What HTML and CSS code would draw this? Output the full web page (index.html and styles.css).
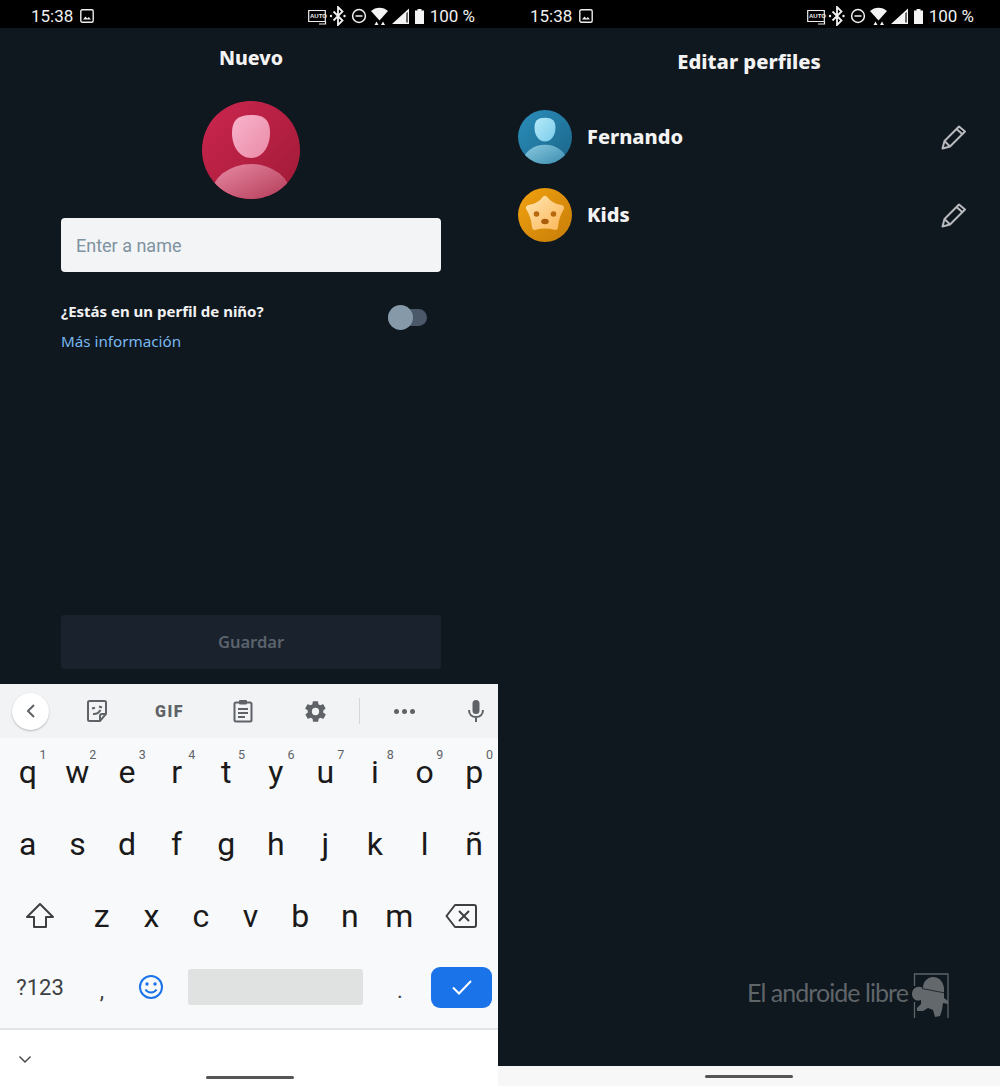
FILE: index.html
```html
<!DOCTYPE html>
<html lang="es">
<head>
<meta charset="utf-8">
<title>Perfiles</title>
<link rel="stylesheet" href="styles.css">
</head>
<body>
<svg class="defs" width="0" height="0" aria-hidden="true">
  <defs>
    <symbol id="status-icons" viewBox="0 0 116 20">
      <g fill="none" stroke="#eee" stroke-width="1.200">
        <path d="M.7 4.500h16.600v11H10.500H.7z"/>
        <path d="M11 18h6.500v-2.500"/>
      </g>
      <text x="2" y="12" class="tiny">AUTO</text>
      <g fill="none" stroke="#f2f2f2" stroke-width="1.800">
        <path d="M25.500 5.500l9 9-4.500 4.500V1l4.500 4.500-9 9"/>
        <circle cx="51" cy="10" r="6.400" stroke-width="1.500"/>
        <path d="M47.500 10h7" stroke-width="1.500"/>
      </g>
      <circle cx="23" cy="10" r="1.200" fill="#f2f2f2"/>
      <circle cx="36.500" cy="10" r="1.200" fill="#f2f2f2"/>
      <path fill="#f4f4f4" d="M63 5c4.500-4.500 12.500-4.500 17 0l-8.500 9.500z"/>
      <path fill="#f4f4f4" d="M66.500 19l2-3.500 2 3.500zM73 19l2-3.500 2 3.500z"/>
      <path fill="#f4f4f4" d="M84 18L101 2.500V18zM98.500 7l-.1 9.500h1.200V6z"/>
      <path fill="#f4f4f4" d="M107 4.500h2.500V3h4v1.500h2.500V18h-9z"/>
    </symbol>
    <symbol id="gallery" viewBox="0 0 14 14">
      <rect x=".8" y=".8" width="12.400" height="12.400" rx="1.500" fill="none" stroke="#eee" stroke-width="1.400"/>
      <path d="M3 10.500l2.500-3 1.800 2 1.500-1.500 2.200 2.500z" fill="#eee"/>
    </symbol>
    <symbol id="pencil" viewBox="0 0 26 26">
      <path fill="none" stroke="#b8babd" stroke-width="2" stroke-linejoin="round" d="M1.500 24.500l2-7.500L18 2.500l6 5L9 22.500zM15.500 5l6 5.300M3.500 17L9 22.500"/>
    </symbol>
    <linearGradient id="redbg" x1="0" y1="0" x2="1" y2="1">
      <stop offset="0" stop-color="#cc264f"/><stop offset="1" stop-color="#a01a36"/>
    </linearGradient>
    <linearGradient id="redface" x1="0" y1="0" x2="1" y2="1">
      <stop offset="0" stop-color="#f8b4cb"/><stop offset="1" stop-color="#ea8aa8"/>
    </linearGradient>
    <linearGradient id="redbody" x1="0" y1="0" x2=".6" y2="1">
      <stop offset="0" stop-color="#e98ca6"/><stop offset="1" stop-color="#a82a47"/>
    </linearGradient>
    <linearGradient id="bluebg" x1="0" y1="0" x2="1" y2="1">
      <stop offset="0" stop-color="#2b8fbb"/><stop offset="1" stop-color="#1b6488"/>
    </linearGradient>
    <linearGradient id="blueface" x1="0" y1="0" x2="1" y2="1">
      <stop offset="0" stop-color="#b6eafa"/><stop offset="1" stop-color="#7accea"/>
    </linearGradient>
    <linearGradient id="bluebody" x1="0" y1="0" x2=".6" y2="1">
      <stop offset="0" stop-color="#8ccbe0"/><stop offset="1" stop-color="#2b7fa4"/>
    </linearGradient>
    <linearGradient id="orangebg" x1="0" y1="0" x2="1" y2="1">
      <stop offset="0" stop-color="#f2a20f"/><stop offset="1" stop-color="#c67c08"/>
    </linearGradient>
    <linearGradient id="star" gradientUnits="userSpaceOnUse" x1="12" y1="8" x2="42" y2="42">
      <stop offset="0" stop-color="#ffe3ae"/><stop offset="1" stop-color="#fdb85a"/>
    </linearGradient>
    <clipPath id="circle-clip"><circle cx="49" cy="49" r="49"/></clipPath>
    <symbol id="avatar-red" viewBox="0 0 98 98">
      <circle cx="49" cy="49" r="49" fill="url(#redbg)"/>
      <path d="M49 14c14 0 19 6 19 18 0 14-8 25-19 25S30 46 30 32c0-12 5-18 19-18z" fill="url(#redface)"/>
      <ellipse cx="49" cy="95" rx="40" ry="32" fill="url(#redbody)" clip-path="url(#circle-clip)"/>
    </symbol>
    <symbol id="avatar-blue" viewBox="0 0 98 98">
      <circle cx="49" cy="49" r="49" fill="url(#bluebg)"/>
      <path d="M49 14c14 0 19 6 19 18 0 14-8 25-19 25S30 46 30 32c0-12 5-18 19-18z" fill="url(#blueface)"/>
      <ellipse cx="49" cy="95" rx="40" ry="32" fill="url(#bluebody)" clip-path="url(#circle-clip)"/>
    </symbol>
    <symbol id="avatar-kids" viewBox="0 0 54 54">
      <circle cx="27" cy="27" r="27" fill="url(#orangebg)"/>
      <path d="M27 11Q32 18 43 20 38 28 37 39 27 36 17 39 16 28 11 20 22 18 27 11z" fill="url(#star)" stroke="url(#star)" stroke-width="6" stroke-linejoin="round"/>
      <circle cx="18.500" cy="26" r="2.800" fill="#b8690f"/>
      <circle cx="35.500" cy="26" r="2.800" fill="#b8690f"/>
      <ellipse cx="27" cy="33.500" rx="3.800" ry="2.800" fill="#a85c0c"/>
    </symbol>
  </defs>
</svg>

<main class="page">
  <section class="phone phone-left">
    <header class="status">
      <div class="status-time"><span>15:38</span><svg class="ic-gallery"><use href="#gallery"/></svg></div>
      <div class="status-right"><svg class="ic-status"><use href="#status-icons"/></svg><span>100 %</span></div>
    </header>
    <div class="screen new-profile">
      <h1 class="title title-new">Nuevo</h1>
      <svg class="avatar-big"><use href="#avatar-red"/></svg>
      <div class="input">Enter a name</div>
      <div class="kid-row">
        <div class="kid-text">
          <p class="kid-q">¿Estás en un perfil de niño?</p>
          <a class="kid-link">Más información</a>
        </div>
        <div class="toggle"><span class="toggle-knob"></span></div>
      </div>
      <div class="save">Guardar</div>
    </div>
    <div class="keyboard">
      <div class="kb-tools">
        <span class="kb-back"><svg width="12" height="16" viewBox="0 0 12 16"><path d="M9 2L3 8l6 6" fill="none" stroke="#5f6368" stroke-width="2"/></svg></span>
        <svg class="t-sticker" width="22" height="24" viewBox="0 0 22 24"><path d="M3.500 2h15A1.500 1.500 0 0 1 20 3.500V15l-6 7H3.500A1.500 1.500 0 0 1 2 20.500v-17A1.500 1.500 0 0 1 3.500 2z" fill="none" stroke="#5f6368" stroke-width="2"/><path d="M14 22v-5a2 2 0 0 1 2-2h4" fill="none" stroke="#5f6368" stroke-width="2"/><path d="M6 9.500l3-.8M13 7.500l3 1M7 15c3.500.3 6-1.500 7.500-4" fill="none" stroke="#5f6368" stroke-width="2"/></svg>
        <span class="t-gif">GIF</span>
        <svg class="t-clip" width="20" height="24" viewBox="0 0 20 24"><rect x="1.500" y="3.500" width="17" height="19" rx="1.500" fill="none" stroke="#5f6368" stroke-width="2"/><rect x="6" y="1" width="8" height="4.500" rx="1" fill="#5f6368"/><path d="M5 10h10M5 14h10M5 18h7" stroke="#5f6368" stroke-width="1.800"/></svg>
        <svg class="t-gear" width="25" height="25" viewBox="0 0 24 24"><path fill="#5f6368" d="M19.400 13c0-.3.100-.7.100-1s0-.7-.1-1l2.100-1.600c.2-.2.200-.4.100-.6l-2-3.500c-.1-.2-.4-.3-.6-.2l-2.500 1c-.5-.4-1.100-.7-1.700-1l-.4-2.600c0-.3-.2-.4-.5-.4h-4c-.3 0-.5.200-.5.400l-.4 2.600c-.6.300-1.200.6-1.700 1l-2.500-1c-.2-.1-.5 0-.6.200l-2 3.500c-.1.200-.1.500.1.600L4.600 11c0 .3-.1.700-.1 1s0 .7.100 1l-2.100 1.600c-.2.200-.2.400-.1.600l2 3.500c.1.200.4.300.6.200l2.500-1c.5.400 1.100.7 1.700 1l.4 2.600c0 .3.200.4.500.4h4c.3 0 .5-.2.500-.4l.4-2.600c.6-.3 1.200-.6 1.700-1l2.500 1c.2.100.5 0 .6-.2l2-3.500c.1-.2.100-.5-.1-.6zM12 15.500a3.500 3.500 0 1 1 0-7 3.500 3.500 0 0 1 0 7z"/></svg>
        <span class="t-sep"></span>
        <span class="t-dots"><i></i><i></i><i></i></span>
        <svg class="t-mic" width="18" height="24" viewBox="0 0 18 24"><rect x="5.500" y="1" width="7" height="14" rx="3.500" fill="#5f6368"/><path d="M2 11c0 4.500 3 7 7 7s7-2.500 7-7M9 18v5" fill="none" stroke="#5f6368" stroke-width="2"/></svg>
      </div>
      <div class="kb-keys">
        <div class="kb-row">
          <span class="key">q<sup>1</sup></span><span class="key">w<sup>2</sup></span><span class="key">e<sup>3</sup></span><span class="key">r<sup>4</sup></span><span class="key">t<sup>5</sup></span><span class="key">y<sup>6</sup></span><span class="key">u<sup>7</sup></span><span class="key">i<sup>8</sup></span><span class="key">o<sup>9</sup></span><span class="key">p<sup>0</sup></span>
        </div>
        <div class="kb-row">
          <span class="key">a</span><span class="key">s</span><span class="key">d</span><span class="key">f</span><span class="key">g</span><span class="key">h</span><span class="key">j</span><span class="key">k</span><span class="key">l</span><span class="key">ñ</span>
        </div>
        <div class="kb-row kb-row-short">
          <span class="key key-wide"><svg width="30" height="28" viewBox="0 0 30 28"><path d="M15 2L2 15h7v10h12V15h7z" fill="none" stroke="#3c4043" stroke-width="2" stroke-linejoin="round"/></svg></span>
          <span class="key">z</span><span class="key">x</span><span class="key">c</span><span class="key">v</span><span class="key">b</span><span class="key">n</span><span class="key">m</span>
          <span class="key key-wide"><svg width="32" height="26" viewBox="0 0 32 26"><path d="M10 2h19a2 2 0 0 1 2 2v18a2 2 0 0 1-2 2H10L1.500 13z" fill="none" stroke="#3c4043" stroke-width="2" stroke-linejoin="round"/><path d="M14 8l10 10M24 8L14 18" stroke="#3c4043" stroke-width="2"/></svg></span>
        </div>
        <div class="kb-row">
          <span class="key key-wide key-sym">?123</span>
          <span class="key key-comma">,</span>
          <span class="key"><svg width="26" height="26" viewBox="0 0 26 26"><circle cx="13" cy="13" r="11" fill="none" stroke="#1a73e8" stroke-width="2"/><circle cx="9" cy="10" r="1.700" fill="#1a73e8"/><circle cx="17" cy="10" r="1.700" fill="#1a73e8"/><path d="M7.500 15.500c2.500 4 8.500 4 11 0" fill="none" stroke="#1a73e8" stroke-width="2"/></svg></span>
          <span class="key-space-wrap"><span class="key-space"></span></span>
          <span class="key key-comma">.</span>
          <span class="key key-wide"><span class="key-enter"><svg width="24" height="20" viewBox="0 0 24 20"><path d="M3 10.500l6 6L21 4" fill="none" stroke="#fff" stroke-width="2"/></svg></span></span>
        </div>
      </div>
      <div class="kb-nav">
        <svg class="kb-hide" width="14" height="9" viewBox="0 0 14 9"><path d="M1.500 1.500L7 7l5.500-5.500" fill="none" stroke="#444" stroke-width="1.400"/></svg>
        <span class="nav-bar"></span>
      </div>
    </div>
  </section>

  <section class="phone phone-right">
    <header class="status">
      <div class="status-time"><span>15:38</span><svg class="ic-gallery"><use href="#gallery"/></svg></div>
      <div class="status-right"><svg class="ic-status"><use href="#status-icons"/></svg><span>100 %</span></div>
    </header>
    <div class="screen edit-profiles">
      <h1 class="title title-edit">Editar perfiles</h1>
      <ul class="profiles">
        <li class="profile"><svg class="avatar"><use href="#avatar-blue"/></svg><span class="profile-name">Fernando</span><svg class="pencil"><use href="#pencil"/></svg></li>
        <li class="profile"><svg class="avatar"><use href="#avatar-kids"/></svg><span class="profile-name">Kids</span><svg class="pencil"><use href="#pencil"/></svg></li>
      </ul>
      <div class="watermark">
        <span>El androide libre</span>
        <svg width="50" height="56" viewBox="0 0 50 56">
          <path d="M9.500 18V6h33.500v44M9.500 34v16" fill="none" stroke="#5d6468" stroke-width="1.300"/>
          <path fill="#62686c" d="M18 20c0-7 5-11 10-11 6 0 10 4 11 11v10l4 3v3l-5-1-1 7-2 6-5 1-2-7-5-2-5 3h-6v-3l4-4v-4c-6 2-9-2-9-6 0-6 6-9 11-6z"/>
          <path d="M17 20.500l23 4.500" stroke="#0f171f" stroke-width=".8"/>
        </svg>
      </div>
    </div>
    <div class="nav-right"><span class="nav-bar"></span></div>
  </section>
</main>
</body>
</html>
```

FILE: styles.css
```css
* { box-sizing: border-box; }
html, body { margin: 0; padding: 0; }
body { width: 1000px; height: 1086px; overflow: hidden; background: #000; font-family: Roboto, sans-serif; }
.defs { position: absolute; }
.tiny { font: 700 6px "Liberation Sans", sans-serif; fill: #eee; }
.page { display: flex; height: 1086px; }
.phone { display: flex; flex-direction: column; height: 1086px; }
.phone-left { width: 498px; }
.phone-right { width: 502px; }

.status { height: 28px; background: #000; color: #f0f0f0; display: flex; justify-content: space-between; align-items: center; font: 400 17px Roboto, sans-serif; flex: none; padding: 4px 23px 0 31px; }
.phone-right .status { padding: 4px 26px 0 32px; }
.status-time, .status-right { display: flex; align-items: center; }
.ic-gallery { width: 14px; height: 14px; margin-left: 7px; }
.ic-status { width: 116px; height: 20px; margin-right: 6px; }

.screen { background: #0f171f; flex: 1; display: flex; flex-direction: column; min-height: 0; }
.title { margin: 0; text-align: center; color: #f3f3f3; font: 800 19.500px "Noto Sans", sans-serif; line-height: 26px; }
.title-new { padding-top: 17px; }
.title-edit { padding-top: 20px; font-size: 20.200px; }

.new-profile { padding: 0 57px 15px 61px; align-items: stretch; }
.avatar-big { width: 98px; height: 98px; align-self: center; margin: 30px 0 19px; }
.input { height: 54px; background: #f2f4f6; border-radius: 4px; padding: 0 15px; display: flex; align-items: center; font: 400 18px Roboto, sans-serif; color: #7f929f; flex: none; }
.kid-row { display: flex; justify-content: space-between; margin-top: 29px; padding-right: 14px; }
.kid-q { margin: 0; font: 700 15px/20px "Noto Sans", sans-serif; color: #f2f2f2; }
.kid-link { display: block; margin-top: 10px; font: 400 15.200px/20px "Noto Sans", sans-serif; color: #79b8ee; }
.toggle { width: 39px; height: 17px; margin-top: 8px; border-radius: 9px; background: #4a5869; display: flex; align-items: center; }
.toggle-knob { width: 25px; height: 25px; border-radius: 50%; background: #8599a8; flex: none; }
.save { margin-top: auto; height: 54px; padding-bottom: 2px; background: #1a222e; border-radius: 3px; display: flex; align-items: center; justify-content: center; color: #5b636d; font: 600 16.500px "Noto Sans", sans-serif; flex: none; }

.keyboard { flex: none; height: 402px; background: #f8f9fa; display: flex; flex-direction: column; }
.kb-tools { height: 54px; background: #f1f3f4; display: flex; align-items: center; flex: none; padding-left: 12px; }
.kb-back { width: 37px; height: 37px; border-radius: 50%; background: #fff; box-shadow: 0 1px 2px rgba(0,0,0,.25); display: flex; align-items: center; justify-content: center; flex: none; }
.t-sticker { margin-left: 37px; }
.t-gif { margin-left: 47px; font: 900 16px Roboto, sans-serif; letter-spacing: 1.500px; color: #5f6368; width: 32px; }
.t-clip { margin-left: 46px; }
.t-gear { margin-left: 50px; }
.t-sep { margin-left: 31px; width: 1px; height: 26px; background: #d5d7d9; }
.t-dots { margin-left: 34px; display: flex; gap: 3px; }
.t-dots i { width: 5px; height: 5px; border-radius: 50%; background: #5f6368; }
.t-mic { margin-left: 52px; }

.kb-keys { height: 290px; display: flex; flex-direction: column; flex: none; }
.kb-row { display: flex; height: 72px; padding-left: 3px; flex: none; }
.kb-row-short { height: 71px; }
.key { position: relative; flex: 0 0 49.600px; display: flex; align-items: center; justify-content: center; font: 400 32px Roboto, sans-serif; color: #1a1a1a; height: 68px; }
.key sup { position: absolute; top: 10px; right: 6px; font: 400 12.500px/14px Roboto, sans-serif; color: #5f6368; }
.key-wide { flex: 0 0 74px; }
.key-sym { font-size: 22px; color: #3c4043; }
.key-comma { font-size: 22px; color: #3c4043; padding-top: 6px; }
.key-space-wrap { flex: 0 0 175px; display: flex; justify-content: center; align-items: center; height: 68px; margin: 0 12px; }
.key-space { width: 175px; height: 36px; background: #e0e1e1; border-radius: 3px; }
.key-enter { width: 61px; height: 41px; border-radius: 9px; background: #1a73e8; display: flex; align-items: center; justify-content: center; flex: none; }

.kb-nav { flex: 1; background: #fff; border-top: 2px solid #e3e4e5; position: relative; }
.kb-hide { position: absolute; left: 18px; top: 25px; }
.nav-bar { width: 88px; height: 3px; background: #555; border-radius: 2px; }
.kb-nav .nav-bar { position: absolute; left: 206px; top: 46px; }

.edit-profiles { position: relative; }
.profiles { list-style: none; margin: 23px 0 0; padding: 0 33px 0 20px; }
.profile { display: flex; align-items: center; height: 78px; }
.avatar { width: 54px; height: 54px; flex: none; margin-top: 2px; }
.profile-name { margin-left: 15px; font: 800 20px "Noto Sans", sans-serif; color: #f3f3f3; flex: 1; }
.pencil { width: 26px; height: 26px; margin-top: 2px; }
.watermark { position: absolute; left: 249px; top: 940px; display: flex; align-items: flex-start; color: #5f6569; font: 400 25px/30px Lato, sans-serif; letter-spacing: -.95px; }
.watermark span { margin-top: 9px; }
.watermark svg { margin-left: -3px; }
.nav-right { height: 20px; flex: none; background: #f7f7f7; display: flex; justify-content: center; align-items: center; }
```
